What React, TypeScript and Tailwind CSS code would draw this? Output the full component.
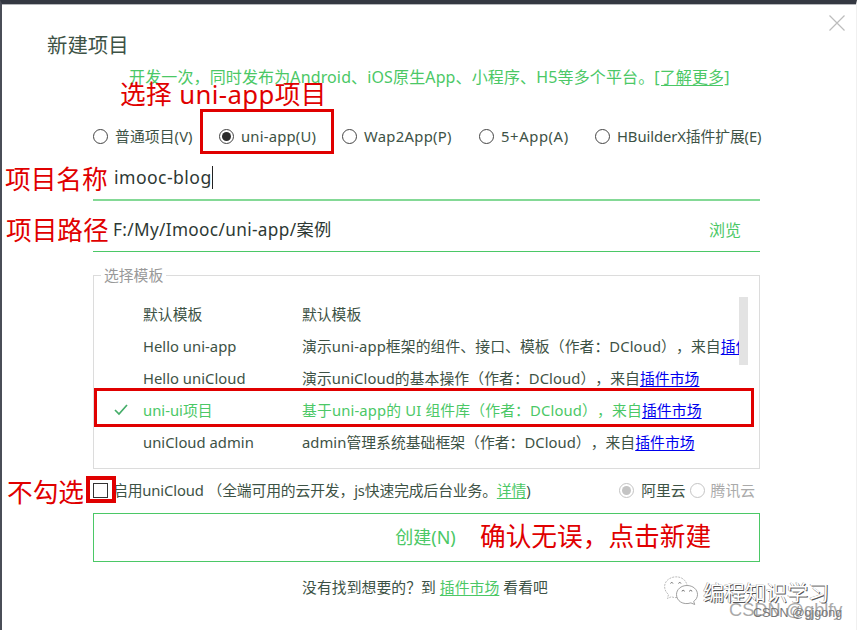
import { useState } from 'react';
import { clsx } from 'clsx';

interface Template {
  id: string;
  name: string;
  desc: string;
  link?: string;
  spacing: string;
}

const PROJECT_TYPES = [
  { id: 'normal', label: '普通项目(V)', className: 'w-[126px] tracking-[0.1px]' },
  { id: 'uni-app', label: 'uni-app(U)', className: 'w-[123px] tracking-[0.2px]' },
  { id: 'wap2app', label: 'Wap2App(P)', className: 'w-[137px] tracking-[0.3px]' },
  { id: '5plus', label: '5+App(A)', className: 'w-[116px] tracking-[0.6px]' },
  { id: 'plugin', label: 'HBuilderX插件扩展(E)', className: 'tracking-[-0.09px]' },
];

const TEMPLATES: Template[] = [
  { id: 'default', name: '默认模板', desc: '默认模板', spacing: '' },
  {
    id: 'hello-uni-app',
    name: 'Hello uni-app',
    desc: '演示uni-app框架的组件、接口、模板（作者：DCloud），来自',
    link: '插件市场',
    spacing: 'tracking-[0.1px]',
  },
  {
    id: 'hello-unicloud',
    name: 'Hello uniCloud',
    desc: '演示uniCloud的基本操作（作者：DCloud），来自',
    link: '插件市场',
    spacing: 'tracking-[0.08px]',
  },
  {
    id: 'uni-ui',
    name: 'uni-ui项目',
    desc: '基于uni-app的 UI 组件库（作者：DCloud），来自',
    link: '插件市场',
    spacing: 'tracking-[0.15px]',
  },
  {
    id: 'unicloud-admin',
    name: 'uniCloud admin',
    desc: 'admin管理系统基础框架（作者：DCloud），来自',
    link: '插件市场',
    spacing: 'tracking-[0.04px]',
  },
];

function Radio({ checked, disabled }: { checked?: boolean; disabled?: boolean }) {
  return (
    <span
      className={clsx(
        'flex size-[15px] shrink-0 items-center justify-center rounded-full border',
        disabled ? 'border-[#c4c4c4]' : 'border-[#444]',
      )}
    >
      {checked && (
        <span
          className={clsx('size-[9px] rounded-full', disabled ? 'bg-[#c4c4c4]' : 'bg-[#2b2b2b]')}
        />
      )}
    </span>
  );
}

function WeChatIcon() {
  return (
    <svg width="36" height="32" viewBox="0 0 36 32" fill="none" strokeWidth="0.8">
      <path
        d="M14 21.5c-2 .4-3.8 0-5.5-.8L4.500 22.500l1-4C-1 13 .5 3 11 1c7-1 12 3 13 8"
        stroke="#aaa"
        strokeDasharray="2 1"
      />
      <path
        d="M24 9.500c6 0 10.500 4 10.500 9 0 3-1.500 5.300-3.800 6.900l1 3.100-3.800-1.600c-8 2.500-14.400-2-14.400-8.400 0-5 4.500-9 10.500-9Z"
        fill="#fff"
        stroke="#888"
      />
      <path
        d="M7.500 7.500a1.300 1.300 0 0 1 2.500 0M15.500 7.500a1.300 1.300 0 0 1 2.500 0M19 15.500a1.200 1.200 0 0 1 2.400 0M26.500 15.500a1.200 1.200 0 0 1 2.400 0"
        stroke="#555"
      />
    </svg>
  );
}

export default function App() {
  const [projectType, setProjectType] = useState('uni-app');
  const [template, setTemplate] = useState('uni-ui');

  return (
    <div
      lang="zh-CN"
      className="relative h-[630px] w-[857px] overflow-hidden border-t-4 border-r border-l-2 border-t-[#343842] border-r-[#f0f0f0] border-l-[#4a4d57] bg-white font-['Noto_Sans','Noto_Sans_CJK_SC',sans-serif] text-[14.8px] whitespace-nowrap text-[#3d5245] [text-spacing-trim:space-all]"
    >
      <header className="flex h-[57px] items-start justify-between border-t border-[#b5b7bb] pr-[11px] pl-[45px]">
        <h1 className="mt-[24px] text-[20.4px] leading-8">新建项目</h1>
        <button className="mt-[10px]" aria-label="关闭">
          <svg width="16" height="16" viewBox="0 0 16 16" stroke="#bcbcbc" strokeWidth="1.2">
            <path d="M.5.5l15 15M15.500.5l-15 15" />
          </svg>
        </button>
      </header>

      <main className="ml-[91px] w-[667px]">
        <p className="pl-[36px] text-[16px] leading-8 tracking-[0.13px] text-[#4bc866]">
          开发一次，同时发布为Android、iOS原生App、小程序、H5等多个平台。
          <a className="underline underline-offset-2">[了解更多]</a>
        </p>

        <div className="mt-[27px] flex h-[32px] items-center">
          {PROJECT_TYPES.map((type) => (
            <button
              key={type.id}
              className={clsx('flex shrink-0 items-center gap-[7px]', type.className)}
              onClick={() => setProjectType(type.id)}
            >
              <Radio checked={projectType === type.id} />
              {type.label}
            </button>
          ))}
        </div>

        <div className="flex h-[49px] items-center border-b-2 border-[#84d996] pt-[4px] pl-[21px] text-[17.6px] text-[#2d3833]">
          <span className="tracking-[0.45px]">imooc-blog</span>
          <span className="h-[23px] w-px bg-[#222]" />
        </div>
        <div className="flex h-[51px] items-center justify-between border-b border-[#4bc866] pt-[8px] pr-[19px] pl-[20px] text-[17.2px] text-[#2d3833]">
          <span className="tracking-[0.35px]">F:/My/Imooc/uni-app/案例</span>
          <a className="text-[16px] text-[#4bc866]">浏览</a>
        </div>

        <section className="mt-[23px] h-[194px] border border-[#dcdcdc]">
          <h2 className="-mt-[12px] ml-[7px] w-fit bg-white px-[3px] leading-[22px] text-[#999]">
            选择模板
          </h2>
          <div className="mt-[11px] flex h-[164px] w-[655px] items-start">
            <ul className="w-[645px] shrink-0 overflow-hidden pt-px">
              {TEMPLATES.map((item) => (
                <li
                  key={item.id}
                  className={clsx(
                    'flex h-[32px] items-center leading-[32px]',
                    item.id === template && 'text-[#4bc866]',
                  )}
                  onClick={() => setTemplate(item.id)}
                >
                  <span className="w-[49px] shrink-0 pl-[20px]">
                    {item.id === template && (
                      <svg width="14" height="12" viewBox="0 0 14 12" fill="none" stroke="#45ad69" strokeWidth="1.7">
                        <path d="M1 6l4 4 8-9" />
                      </svg>
                    )}
                  </span>
                  <span className="w-[159px] shrink-0 tracking-[0.02px]">{item.name}</span>
                  <span className={item.spacing}>
                    {item.desc}
                    {item.link && (
                      <a className="text-[#0000ee] underline underline-offset-2">{item.link}</a>
                    )}
                  </span>
                </li>
              ))}
            </ul>
            <span className="h-[68px] w-[9px] bg-[#e3e3e3]" />
          </div>
        </section>

        <div className="mb-[2px] flex h-[42px] items-center">
          <span className="size-[15px] border border-[#333]" />
          <span className="ml-[5px] tracking-[-0.13px]">
            启用uniCloud （全端可用的云开发，js快速完成后台业务。
            <a className="text-[#4bc866] underline underline-offset-2">详情</a>)
          </span>
          <span className="ml-auto flex items-center gap-[7px]">
            <Radio checked disabled />
            阿里云
          </span>
          <span className="mr-[5px] ml-[4px] flex items-center gap-[6px] text-[#aaa]">
            <Radio disabled />
            腾讯云
          </span>
        </div>

        <button className="flex h-[49px] w-full items-center justify-center border border-solid border-[#4bc866] pr-[2px] text-[18px] text-[#4bc866]">
          创建(N)
        </button>
        <p className="mt-[9px] pl-[209px] leading-8 tracking-[0.08px]">
          没有找到想要的？到 <a className="text-[#4bc866] underline underline-offset-2">插件市场</a> 看看吧
        </p>
      </main>

      {/* tutorial annotations laid over the dialog */}
      <div className="pointer-events-none absolute -top-[4px] -left-[2px] h-[630px] w-[857px] text-[25.7px] leading-[32px] text-[#e00000]">
        <span className="absolute top-[79px] left-[120px] tracking-[0.4px]">选择 uni-app项目</span>
        <span className="absolute top-[164px] left-[5px]">项目名称</span>
        <span className="absolute top-[215px] left-[6px]">项目路径</span>
        <span className="absolute top-[477px] left-[7px]">不勾选</span>
        <span className="absolute top-[521px] left-[480px]">确认无误，点击新建</span>
        <span className="absolute top-[109px] left-[200px] h-[45px] w-[134px] border-3 border-[#e00000]" />
        <span className="absolute top-[388px] left-[94px] h-[39px] w-[660px] border-3 border-[#e00000]" />
        <span className="absolute top-[476px] left-[86px] h-[27px] w-[30px] border-4 border-[#e00000]" />
      </div>

      <div className="pointer-events-none absolute -top-[4px] -left-[2px] h-[630px] w-[857px]">
        <span className="absolute top-[576px] left-[663px]">
          <WeChatIcon />
        </span>
        <span className="absolute top-[576px] left-[703px] text-[21px] leading-[32px] text-white [text-shadow:1px_1px_0_#555,-0.5px_0_0_#888]">
          编程知识学习
        </span>
        <span className="absolute top-[598px] left-[729px] font-['Liberation_Sans',sans-serif] text-[18.2px] leading-[24px] text-[#aaa]">
          CSDN @gblfy
        </span>
        <span className="absolute top-[604px] left-[753px] font-['Liberation_Sans',sans-serif] text-[12.5px] leading-[18px] text-[#777]">
          CSDN @gjgong
        </span>
      </div>
    </div>
  );
}
